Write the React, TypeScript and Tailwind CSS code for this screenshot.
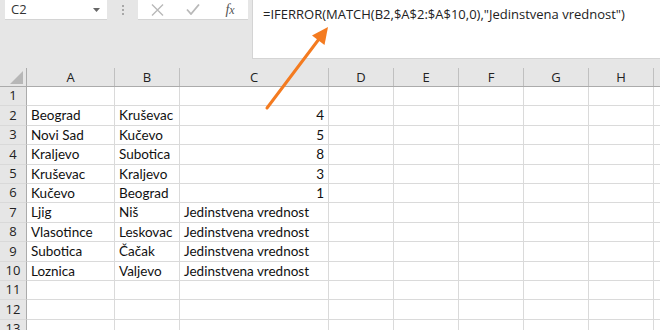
import React from 'react';

const cols = [
  { name: 'A', w: 'w-[88px]' },
  { name: 'B', w: 'w-[65px]' },
  { name: 'C', w: 'w-[149px]' },
  { name: 'D', w: 'w-[65px]' },
  { name: 'E', w: 'w-[65px]' },
  { name: 'F', w: 'w-[65px]' },
  { name: 'G', w: 'w-[65px]' },
  { name: 'H', w: 'w-[65px]' },
];

const rows: string[][] = [
  ['', '', ''],
  ['Beograd', 'Kruševac', '4'],
  ['Novi Sad', 'Kučevo', '5'],
  ['Kraljevo', 'Subotica', '8'],
  ['Kruševac', 'Kraljevo', '3'],
  ['Kučevo', 'Beograd', '1'],
  ['Ljig', 'Niš', 'Jedinstvena vrednost'],
  ['Vlasotince', 'Leskovac', 'Jedinstvena vrednost'],
  ['Subotica', 'Čačak', 'Jedinstvena vrednost'],
  ['Loznica', 'Valjevo', 'Jedinstvena vrednost'],
  ['', '', ''],
  ['', '', ''],
  ['', '', ''],
];

const isNumber = (v: string) => /^\d+$/.test(v);

const FormulaBar: React.FC = () => (
  <div className="flex h-[68px] items-start">
    <div className="ml-[5px] flex h-[19px] w-[102px] items-center justify-between bg-white pl-[6px] pr-[7px] shadow-[0_1px_0_#d4d4d4]">
      <span className="text-[13px] text-[#333]">C2</span>
      <svg width="7" height="4" viewBox="0 0 7 4">
        <path d="M0 0h7L3.5 4z" fill="#666" />
      </svg>
    </div>
    <div className="flex h-[19px] w-[31px] flex-col items-center justify-center gap-[2px]">
      <span className="h-[2px] w-[2px] bg-[#a8a8a8]" />
      <span className="h-[2px] w-[2px] bg-[#a8a8a8]" />
      <span className="h-[2px] w-[2px] bg-[#a8a8a8]" />
    </div>
    <div className="flex h-[19px] w-[110px] items-center bg-white shadow-[0_1px_0_#d4d4d4]">
      <div className="flex w-[36px] justify-center pl-[2px]">
        <svg width="13" height="12" viewBox="0 0 13 12">
          <path d="M1 0.5l11 11M12 0.5l-11 11" stroke="#b9b9b9" strokeWidth="1.4" />
        </svg>
      </div>
      <div className="flex w-[38px] justify-center">
        <svg width="14" height="11" viewBox="0 0 14 11">
          <path d="M1 5.5l4 4.5L13 0.5" stroke="#b9b9b9" strokeWidth="1.8" fill="none" />
        </svg>
      </div>
      <div className="flex w-[36px] justify-center">
        <span className="font-['Liberation_Serif',serif] text-[14px] italic leading-none text-[#555]">
          f<span className="text-[12px]">x</span>
        </span>
      </div>
    </div>
    <div className="ml-[4px] h-[58px] flex-1 border-l border-[#d4d4d4] bg-white pl-[10px] pt-[1px] shadow-[0_1px_0_#d4d4d4]">
      <span className="whitespace-nowrap text-[13px] leading-[18px] text-[#222]">
        =IFERROR(MATCH(B2,$A$2:$A$10,0),"Jedinstvena vrednost")
      </span>
    </div>
  </div>
);

const Header: React.FC = () => (
  <div className="flex h-[19px] border-b border-[#ababab]">
    <div className="relative w-[27px] shrink-0 border-r border-[#ababab]">
      <svg className="absolute bottom-[2px] right-[3px]" width="13" height="13" viewBox="0 0 13 13">
        <path d="M13 0v13H0z" fill="#b7b7b7" />
      </svg>
    </div>
    {cols.map((c) => (
      <div
        key={c.name}
        className={`${c.w} flex shrink-0 items-end justify-center border-r border-[#c0c0c0] pb-[1px] text-[13px] leading-[16px] text-[#222]`}
      >
        {c.name}
      </div>
    ))}
    <div className="flex-1" />
  </div>
);

export default function App() {
  return (
    <div className="relative h-[330px] w-[660px] overflow-hidden bg-[#e6e6e6] font-['Open_Sans',sans-serif]">
      <FormulaBar />
      <Header />
      <div className="bg-white font-['Lato',sans-serif]">
        {rows.map((r, i) => (
          <div key={i} className="flex h-[19.4px]">
            <div className="flex w-[27px] shrink-0 items-center justify-center border-b border-r border-[#ababab] border-b-[#d9d9d9] bg-[#e6e6e6] font-['Open_Sans',sans-serif] text-[13px] text-[#222]">
              {i + 1}
            </div>
            {cols.map((c, j) => {
              const v = j < 3 ? r[j] : '';
              return (
                <div
                  key={c.name}
                  className={`${c.w} flex shrink-0 items-center overflow-visible whitespace-nowrap border-b border-r border-[#dadada] px-[4px] text-[13.5px] text-[#111] ${
                    isNumber(v) ? 'justify-end' : 'justify-start'
                  }`}
                >
                  {v}
                </div>
              );
            })}
            <div className="flex-1 border-b border-[#dadada]" />
          </div>
        ))}
      </div>
      <svg className="absolute left-0 top-0" width="660" height="330" viewBox="0 0 660 330">
        <line x1="267" y1="108" x2="319" y2="39" stroke="#f47b20" strokeWidth="3" strokeLinecap="round" />
        <path d="M328 27 L324.5 45 L312 35.5 Z" fill="#f47b20" />
      </svg>
    </div>
  );
}
